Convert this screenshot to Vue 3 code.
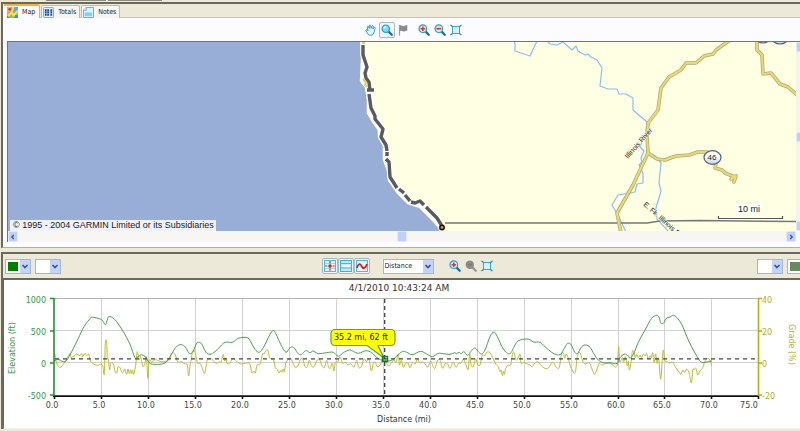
<script setup>
import { ref } from 'vue'

const activeTab = ref('map')
const axis = ref('Distance')

const tabs = [
  { id: 'map', label: 'Map' },
  { id: 'totals', label: 'Totals' },
  { id: 'notes', label: 'Notes' },
]

// Plot area geometry, in chart units
const plotLeft = 54
const tickStep = 46.96
const xTicks = Array.from({ length: 16 }, (_, i) => ({
  x: plotLeft + Math.round(i * tickStep),
  label: (i * 5).toFixed(1),
}))
const yTicks = [
  { y: 299, feet: '1000', grade: '40' },
  { y: 331, feet: '500', grade: '20' },
  { y: 363, feet: '0', grade: '0' },
  { y: 395, feet: '-500', grade: '-20' },
]

const roads = [
  'M730 40L716 50 713 54 704 56 696 63 686 63 681 70 669 77 661 88 658 110 648 123 647 136 648 153 633 185 617 213 621 233',
  'M648 153L657 159 665 160 676 156 689 155 698 152 707 152M716 164L715 168 722 170 725 173 735 177 731 179 736 176 734 182',
  'M757 41V50L762 55 763 74 771 73 780 84 788 87 797 95',
]

// Samples are stored at three steps per chart unit, measured from y = 285
const elevation = `162,230 172,222 190,230 200,226 215,200 235,160 252,125 274,97 280,97 290,99 298,101 308,107 315,119 318,117 325,96 330,95 338,98 350,110 370,140 390,178 405,218 412,217 422,210 432,212 440,220 448,234 465,238 495,234 510,215 525,190 535,181 545,179 556,186 566,203 572,206 580,198 590,174 597,172 605,177 617,201 630,208 645,200 660,185 670,175 680,171 697,172 715,160 735,157 747,162 765,193 778,202 790,188 800,168 810,148 820,136 828,147 842,178 858,202 868,190 875,186 883,189 892,203 904,209 913,200 920,197 930,203 938,198 945,201 955,206 980,203 1000,202 1015,214 1030,203 1048,195 1060,199 1075,205 1098,197 1115,203 1132,219 1152,227 1175,226 1190,213 1208,199 1220,202 1236,209 1262,199 1280,207 1297,215 1315,205 1330,206 1350,208 1365,203 1370,206 1377,202 1383,206 1392,200 1402,211 1410,203 1420,191 1427,190 1435,200 1445,207 1455,195 1470,155 1482,141 1492,155 1510,192 1530,206 1545,180 1555,167 1580,162 1590,164 1600,171 1620,172 1635,185 1655,202 1670,209 1683,207 1693,190 1702,176 1712,177 1725,203 1733,205 1745,185 1758,180 1770,187 1782,207 1795,225 1810,233 1830,233 1852,235 1860,218 1872,208 1882,210 1890,219 1900,208 1915,172 1935,135 1955,100 1970,91 1977,96 1982,113 1990,115 1998,101 2010,96 2020,91 2030,97 2045,118 2065,165 2085,204 2102,230 2115,232 2135,228`
const grade = `162,208 165,208 168,228 178,247 188,240 200,222 205,212 211,206 213,218 218,214 225,212 228,207 240,212 245,206 248,215 255,205 260,212 266,207 270,225 278,235 292,241 305,238 309,246 313,266 316,175 320,174 322,218 325,222 329,254 332,235 340,237 346,262 351,262 354,246 360,248 366,263 370,262 374,252 380,268 384,252 388,266 391,254 395,266 398,255 401,268 407,240 411,203 413,202 416,225 422,214 425,230 430,245 435,235 439,215 444,280 447,228 455,232 465,224 475,227 485,230 497,229 508,223 514,208 520,203 526,210 533,230 545,230 555,237 562,240 566,273 571,235 574,224 577,202 583,196 587,210 593,235 600,235 605,245 612,264 616,260 620,230 627,221 635,222 642,230 650,235 658,230 662,233 666,220 670,208 674,228 677,220 682,236 690,233 697,222 703,222 710,230 725,237 740,234 750,238 756,264 761,258 766,264 771,240 780,238 788,205 792,207 796,200 802,194 806,205 809,218 815,222 822,228 826,248 832,252 837,264 842,256 846,262 849,252 853,260 857,235 864,225 872,222 880,236 886,248 895,240 902,222 908,222 915,245 922,245 928,225 935,244 942,245 950,228 958,222 965,240 973,248 980,226 986,247 991,250 997,234 1002,258 1006,232 1013,232 1020,216 1028,235 1036,232 1044,240 1052,236 1062,246 1070,226 1076,247 1084,245 1092,222 1100,230 1107,223 1114,258 1120,234 1126,232 1132,245 1140,240 1146,228 1152,215 1160,235 1166,243 1175,232 1182,225 1188,232 1195,207 1198,240 1204,226 1210,247 1216,236 1224,234 1230,248 1238,232 1246,236 1252,222 1260,234 1268,230 1276,238 1284,246 1292,228 1300,246 1305,250 1312,228 1320,225 1328,250 1336,235 1343,237 1350,250 1360,232 1368,247 1376,234 1383,235 1390,222 1398,240 1405,252 1409,207 1413,238 1420,245 1427,222 1434,240 1440,240 1447,210 1455,212 1460,202 1470,203 1480,222 1488,238 1495,245 1500,260 1504,255 1507,272 1511,258 1513,268 1517,250 1525,240 1532,240 1538,205 1542,203 1548,225 1555,217 1560,208 1563,235 1570,232 1580,236 1590,240 1596,245 1604,235 1614,230 1622,240 1635,250 1646,248 1654,235 1660,233 1670,248 1678,246 1685,205 1690,205 1694,220 1698,207 1704,218 1710,240 1718,258 1726,262 1732,215 1740,203 1747,225 1755,237 1768,233 1775,250 1780,262 1784,268 1790,255 1798,235 1805,240 1815,236 1830,234 1852,241 1856,185 1859,228 1864,225 1867,218 1871,232 1876,215 1882,243 1885,228 1888,255 1894,225 1897,198 1902,203 1906,218 1910,208 1915,218 1920,210 1925,217 1930,207 1935,213 1940,205 1944,222 1950,212 1954,218 1958,203 1962,232 1967,207 1971,235 1976,220 1982,283 1987,222 1990,195 1994,225 2002,230 2010,235 2016,230 2022,238 2030,252 2038,262 2043,268 2048,256 2054,262 2060,252 2068,266 2074,294 2079,253 2082,254 2088,250 2093,270 2100,258 2108,248 2114,230 2122,220 2130,225 2135,242`

function toCurve(samples) {
  const p = samples.split(' ').map((s) => {
    const [x, y] = s.split(',').map(Number)
    return [x / 3, 285 + y / 3]
  })
  let d = `M${p[0][0].toFixed(1)} ${p[0][1].toFixed(1)}`
  for (let i = 1; i < p.length; i++) {
    const a = p[i - 2] || p[i - 1]
    const b = p[i - 1]
    const c = p[i]
    const e = p[i + 1] || c
    // Handles stay inside their segment so that spikes do not fold back
    const third = (c[0] - b[0]) / 3
    const s1 = (c[1] - a[1]) / (c[0] - a[0])
    const s2 = (e[1] - b[1]) / (e[0] - b[0])
    d += ` C${(b[0] + third).toFixed(1)} ${(b[1] + s1 * third).toFixed(1)} ${(c[0] - third).toFixed(1)} ${(c[1] - s2 * third).toFixed(1)} ${c[0].toFixed(1)} ${c[1].toFixed(1)}`
  }
  return d
}
const elevationPath = toCurve(elevation)
const gradePath = toCurve(grade)
</script>

<template>
  <main class="app">
    <div class="top-strip"><span></span><span></span></div>

    <section class="panel map-panel">
      <nav class="tabs" role="tablist">
        <button
          v-for="tab in tabs"
          :key="tab.id"
          type="button"
          role="tab"
          class="tab"
          :class="{ active: activeTab === tab.id }"
          :aria-selected="activeTab === tab.id"
          @click="activeTab = tab.id"
        >
          <svg v-if="tab.id === 'map'" class="tab-icon" viewBox="0 0 12 12">
            <rect x="0" y="0" width="12" height="12" rx="1" fill="#8cbf5a" />
            <path d="M0 0h5l-1 5-4 2z" fill="#f3a08a" />
            <path d="M7 0h5v5l-4 2z" fill="#4fb3dd" />
            <path d="M0 11l5-5 2 3 5-5" fill="none" stroke="#ffe04a" stroke-width="2.4" />
            <path d="M7 0L5 6" stroke="#ffe04a" stroke-width="2" />
            <circle cx="3" cy="2.5" r="1.5" fill="#e2321f" />
            <path d="M0 9l3 3H0z M9 9h3v3H8z" fill="#2e9bc9" />
          </svg>
          <svg v-else-if="tab.id === 'totals'" class="tab-icon" viewBox="0 0 12 12">
            <rect x="0.5" y="0.5" width="11" height="11" rx="1" fill="#d9f1fd" stroke="#4bb3e6" />
            <path d="M2 2.500h2v2H2z M4.600 2.500h2v2h-2z M8 2.500h2v2H8z M2 5h2v2H2z M4.600 5h2v2h-2z M8 5h2v2H8z M2 7.500h2v2H2z M4.600 7.500h2v2h-2z M8 7.500h2v2H8z" fill="#25459c" />
          </svg>
          <svg v-else class="tab-icon" viewBox="0 0 12 12">
            <path d="M3.500 0.500h8v11h-11v-8z" fill="#d6f3ff" stroke="#3fb1e6" />
            <path d="M3.500 0.500v3h-3" fill="#fff" stroke="#3fb1e6" />
            <path d="M2 6h8v4H2z" fill="#7fd0f5" />
          </svg>
          {{ tab.label }}
        </button>
      </nav>

      <div class="map-tools">
        <button type="button" class="tool" aria-label="Pan">
          <svg viewBox="0 0 12 12">
            <path d="M3.300 10.500L0.900 6.600c-.4-.9.700-1.300 1.200-.6l.9 1L2.200 3c-.1-1 1.100-1.200 1.400-.3l.6 1.700.1-2.700c0-1 1.400-1 1.500 0l.3 2.600.8-2.200c.4-.9 1.600-.5 1.400.4L7.900 5l1-1.400c.6-.7 1.700 0 1.300.8L9.300 7.700 8 10.500c-1 .9-3.700.9-4.700 0z" fill="#e6f8ff" stroke="#2492cf" stroke-width=".9" />
          </svg>
        </button>
        <button type="button" class="tool selected" aria-label="Zoom">
          <svg viewBox="0 0 12 12">
            <path d="M7.400 7.400l3.300 3.300" stroke="#1d6ea8" stroke-width="2.3" stroke-linecap="round" />
            <circle cx="4.800" cy="4.700" r="3.700" fill="#7fdcf8" stroke="#249fd6" stroke-width="1.2" />
            <path d="M2.900 4.500c.2-1.100 1-1.700 2-1.800" stroke="#fff" stroke-width="1.2" fill="none" />
          </svg>
        </button>
        <button type="button" class="tool" aria-label="Flag">
          <svg viewBox="0 0 12 12">
            <path d="M2.500 1v10.500" stroke="#999" stroke-width="1.2" />
            <path d="M3 1.500c1.500-.8 2.500 1 4 .6.900-.2 1.700-.8 3.300-1v5.400C8.500 6.500 8 7.700 6.500 7.400 5.200 7.100 4.500 6.400 3 7.200z" fill="#8b8b8b" />
          </svg>
        </button>
        <button type="button" class="tool after-gap" aria-label="Zoom in">
          <svg viewBox="0 0 12 12">
            <path d="M7.400 7.400l3.300 3.300" stroke="#1d6ea8" stroke-width="2.3" stroke-linecap="round" />
            <circle cx="4.800" cy="4.700" r="3.800" fill="#c9f1fd" stroke="#249fd6" stroke-width="1.2" />
            <path d="M4.800 2.400v4.600M2.500 4.700h4.600" stroke="#e8361c" stroke-width="1.6" />
          </svg>
        </button>
        <button type="button" class="tool" aria-label="Zoom out">
          <svg viewBox="0 0 12 12">
            <path d="M7.400 7.400l3.300 3.300" stroke="#1d6ea8" stroke-width="2.3" stroke-linecap="round" />
            <circle cx="4.800" cy="4.700" r="3.800" fill="#c9f1fd" stroke="#249fd6" stroke-width="1.2" />
            <path d="M2.400 4.700h4.800" stroke="#e8361c" stroke-width="1.7" />
          </svg>
        </button>
        <button type="button" class="tool" aria-label="Fit to view">
          <svg viewBox="0 0 12 12">
            <rect x="2.5" y="2.5" width="7" height="7" fill="#d3f2fe" stroke="#37a9dc" />
            <path d="M0.500 1l2 1.500M11.500 1l-2 1.500M0.500 11l2-1.500M11.500 11l-2-1.500" stroke="#1f86bd" stroke-width="1.3" />
          </svg>
        </button>
      </div>

      <div class="map-frame">
        <div class="map-view">
          <svg class="map" viewBox="8 42 788 189" preserveAspectRatio="xMidYMid slice" role="img" aria-label="Coastal map">
            <defs>
              <linearGradient id="shield" x1="0" y1="0" x2="0" y2="1">
                <stop offset="0.45" stop-color="#fff" />
                <stop offset="1" stop-color="#b9d2ec" />
              </linearGradient>
            </defs>
            <rect x="8" y="42" width="788" height="189" fill="#98aed6" />
            <path d="M362 40L362 60 361 81 366 87 368 100 368 113 374 123 379 130 379 137 384 146 384 160 388 170 389 180 398 193 408 203 420 207 430 217 439 227 441 233H798V40Z" fill="#ffffe3" stroke="#fff" stroke-width="2.5" stroke-linejoin="round" />
            <path d="M363 42V55L367 67 365 77 369 82 370 89 369 94 371 108 375 117 382 128 381 137 386 145 387 157 389 162 390 177 397 188 410 201 415 203 419 201 426 207 437 218 442 227" fill="none" stroke="#fff" stroke-width="5.5" stroke-linejoin="round" />
            <path d="M363 79l3 4-1 2 2 2" fill="none" stroke="#e5cf58" stroke-width="2" />
            <path d="M362 43h3" stroke="#e5cf58" stroke-width="2" />

            <g fill="none" stroke="#84c1f2" stroke-width="1.2" stroke-linejoin="round">
              <path d="M514 41L515 44 515 51 530 56 537 41" />
              <path d="M548 42L550 44 557 45 563 42 572 50 576 46 578 51 585 55 588 54 591 57 597 60 602 68 600 86 608 89 617 89 619 94 626 94 633 98 633 110 647 122 646 132 640 147 644 151 641 158 642 162 639 165 643 173 643 183 637 184 635 192 618 195 612 205 618 215 626 232" />
              <path d="M648 153L655 156 661 163 659 183 661 191 656 208 657 219 669 232" />
            </g>

            <path d="M445 223H647L660 221 700 220.500 796 221.500" fill="none" stroke="#77777a" stroke-width="1.5" />

            <g fill="none" stroke-linejoin="round" stroke-linecap="round">
              <path v-for="d in roads" :key="d" :d="d" stroke="#aaa68c" stroke-width="3.6" />
              <path v-for="d in roads" :key="d" :d="d" stroke="#ecda64" stroke-width="2.1" />
            </g>

            <g fill="url(#shield)" stroke="#55616d" stroke-width="1.2">
              <ellipse cx="763" cy="38" rx="7" ry="5" />
              <ellipse cx="780" cy="38" rx="8" ry="6" />
              <ellipse cx="712.5" cy="157.5" rx="8.5" ry="6.8" />
            </g>
            <text x="712" y="160" class="shield-label" text-anchor="middle">46</text>

            <path
              d="M363 45V55L367 67 365 73 366 78 369 82 370 91M367 90h7M369 94L371 108 375 116 375 119 383 129 381 137 386 145 387 151M387 152V156M386 159L389 162 390 177 397 188M399 189L404 193M405 195L410 201M411 202L415 203 420 201 424 205M426 207L437 218 442 226"
              fill="none"
              stroke="#5b5b5d"
              stroke-width="3.4"
              stroke-linejoin="round"
            />
            <circle cx="442" cy="227.5" r="2.2" fill="#f08a1c" stroke="#111" stroke-width="1.5" />

            <text transform="translate(628 159) rotate(-49)" class="river-label">Illinois River</text>
            <text transform="translate(643 205) rotate(42)" class="river-label">E. Fk. Illinois R</text>

            <rect x="736" y="203" width="26" height="10" fill="#fff" />
            <text x="749" y="212" class="scale-label" text-anchor="middle">10 mi</text>
            <path d="M718.500 216v2.500H782.500V216" fill="none" stroke="#55555a" stroke-width="1.2" />
          </svg>
          <p class="copyright">© 1995 - 2004 GARMIN Limited or its Subsidiaries</p>
        </div>

        <div class="scroll-v">
          <button type="button" aria-label="Scroll up"></button>
          <span class="thumb"></span>
          <button type="button" aria-label="Scroll down"></button>
        </div>

        <div class="scroll-h">
          <button type="button" aria-label="Scroll left">
            <svg viewBox="0 0 10 10"><path d="M6 2.500L3.500 5 6 7.500" /></svg>
          </button>
          <span class="thumb"></span>
          <button type="button" aria-label="Scroll right">
            <svg viewBox="0 0 10 10"><path d="M4 2.500L6.500 5 4 7.500" /></svg>
          </button>
        </div>
      </div>
    </section>

    <section class="panel chart-panel">
      <div class="chart-tools">
        <div class="group">
          <span class="combo green">
            <select aria-label="Left series colour"><option></option></select>
            <svg class="arrow" viewBox="0 0 10 13"><path d="M2.500 5L5 7.500 7.500 5" /></svg>
          </span>
          <span class="combo">
            <select aria-label="Second left series"><option></option></select>
            <svg class="arrow" viewBox="0 0 10 13"><path d="M2.500 5L5 7.500 7.500 5" /></svg>
          </span>
        </div>

        <div class="group center">
          <div class="toggles">
            <button type="button" class="tool selected" aria-label="Crosshair">
              <svg viewBox="0 0 12 12">
                <rect x="0.5" y="0.5" width="11" height="11" fill="#dcf6ff" stroke="#4dbbe8" />
                <path d="M1 3.500h10M1 8.500h10" stroke="#9bdcf5" />
                <path d="M6 1v10M1 6h10" stroke="#e0261c" stroke-width="1.2" stroke-dasharray="2 .6" />
                <circle cx="6" cy="6" r="1.5" fill="#e0261c" />
              </svg>
            </button>
            <button type="button" class="tool selected" aria-label="Grid">
              <svg viewBox="0 0 12 12">
                <rect x="0.5" y="0.5" width="11" height="11" fill="#bfeafb" stroke="#41aee4" />
                <path d="M1 3.500h10M1 8h10" stroke="#4bb4ea" stroke-width="1.2" />
                <path d="M2 6h8" stroke="#eefaff" stroke-width="2" />
              </svg>
            </button>
            <button type="button" class="tool selected" aria-label="Smoothing">
              <svg viewBox="0 0 12 12">
                <rect x="0.5" y="0.5" width="11" height="11" fill="#e4f8ff" stroke="#4dbbe8" />
                <path d="M1 8C2 3.500 4 3 5.500 6S9 9.500 11 4" fill="none" stroke="#e81313" stroke-width="1.7" />
              </svg>
            </button>
          </div>
          <span class="combo wide">
            <select v-model="axis" aria-label="Horizontal axis">
              <option>Distance</option>
              <option>Time</option>
            </select>
            <svg class="arrow" viewBox="0 0 10 13"><path d="M2.500 5L5 7.500 7.500 5" /></svg>
          </span>
          <div class="zooms">
            <button type="button" class="tool" aria-label="Zoom chart in">
              <svg viewBox="0 0 12 12">
                <path d="M7.400 7.400l3.300 3.300" stroke="#1d6ea8" stroke-width="2.3" stroke-linecap="round" />
                <circle cx="4.800" cy="4.700" r="3.800" fill="#c9f1fd" stroke="#249fd6" stroke-width="1.2" />
                <path d="M4.800 2.400v4.600M2.500 4.700h4.600" stroke="#e8361c" stroke-width="1.6" />
              </svg>
            </button>
            <button type="button" class="tool" aria-label="Zoom chart out">
              <svg viewBox="0 0 12 12">
                <path d="M7.400 7.400l3.300 3.300" stroke="#999" stroke-width="2.3" stroke-linecap="round" />
                <circle cx="4.800" cy="4.700" r="4.200" fill="#8a8a8a" />
                <path d="M2.800 4.700h4" stroke="#777" stroke-width="1.4" />
              </svg>
            </button>
            <button type="button" class="tool" aria-label="Fit chart">
              <svg viewBox="0 0 12 12">
                <rect x="2.5" y="2.5" width="7" height="7" fill="#d3f2fe" stroke="#37a9dc" />
                <path d="M0.500 1l2 1.500M11.500 1l-2 1.500M0.500 11l2-1.500M11.500 11l-2-1.500" stroke="#1f86bd" stroke-width="1.3" />
              </svg>
            </button>
          </div>
        </div>

        <div class="group end">
          <span class="combo">
            <select aria-label="Second right series"><option></option></select>
            <svg class="arrow" viewBox="0 0 10 13"><path d="M2.500 5L5 7.500 7.500 5" /></svg>
          </span>
          <span class="combo olive">
            <select aria-label="Right series colour"><option></option></select>
            <svg class="arrow" viewBox="0 0 10 13"><path d="M2.500 5L5 7.500 7.500 5" /></svg>
          </span>
        </div>
      </div>

      <div class="chart-frame">
        <svg class="chart" viewBox="4 280 796 148" role="img" aria-label="Elevation and grade by distance">
          <text x="399" y="291" class="title" text-anchor="middle">4/1/2010 10:43:24 AM</text>

          <g stroke="#d2d2d2">
            <line v-for="t in xTicks.slice(1, 15)" :key="t.label" :x1="t.x + 0.5" :x2="t.x + 0.5" y1="299" y2="395" />
            <line v-for="t in yTicks.slice(1, 3)" :key="t.y" x1="55" x2="758" :y1="t.y - 0.5" :y2="t.y - 0.5" />
          </g>
          <path d="M54 298.500H758" stroke="#b4b4b4" />

          <path :d="gradePath" fill="none" stroke="#bdbb2c" />
          <path :d="elevationPath" fill="none" stroke="#42a24a" />

          <path d="M55 358.800H758" stroke="#444" stroke-width="1.2" stroke-dasharray="4 4" />
          <path d="M384.700 299V395" stroke="#333" stroke-width="1.2" stroke-dasharray="4 3" />

          <path d="M53 396.200H759" stroke="#111" stroke-width="1.7" />
          <g stroke="#111" stroke-width="1.6">
            <line v-for="t in xTicks" :key="t.label" :x1="t.x + 0.5" :x2="t.x + 0.5" y1="396" y2="399" />
          </g>
          <path d="M54 298V396M50 298.500h4M50 331h4M50 363h4M50 395h4" stroke="#1c962a" stroke-width="1.6" />
          <path d="M758.500 298V396M758 298.500h4M758 331h4M758 363h4M758 395h4" stroke="#b1ae17" stroke-width="1.6" />

          <g class="tick" fill="#444">
            <text v-for="t in xTicks" :key="t.label" :x="t.label === '75.0' ? t.x - 9 : t.x - 2" y="408" text-anchor="middle">{{ t.label }}</text>
            <text x="404" y="422" text-anchor="middle" fill="#333">Distance (mi)</text>
          </g>
          <g class="tick" fill="#2f9b3d">
            <text v-for="t in yTicks" :key="t.feet" x="46" :y="t.y + 4" text-anchor="end">{{ t.feet }}</text>
            <text transform="translate(15 374) rotate(-90)">Elevation (ft)</text>
          </g>
          <g class="tick" fill="#b3b024">
            <text v-for="t in yTicks" :key="t.grade" x="762" :y="t.y + 4">{{ t.grade }}</text>
            <text transform="translate(789 324) rotate(90)">Grade (%)</text>
          </g>

          <g>
            <path d="M335 329.500H391a4 4 0 0 1 4 4V341.500a4 4 0 0 1-4 4H378L384 358 367 345.500H335a4 4 0 0 1-4-4V333.500a4 4 0 0 1 4-4Z" fill="#ffff00" stroke="#52a63a" stroke-width="1.2" />
            <rect x="382.5" y="356.5" width="5" height="5" fill="none" stroke="#147a24" stroke-width="1.4" />
            <text x="334" y="340" class="tick" fill="#222">35.2 mi, 62 ft</text>
          </g>
        </svg>
      </div>
    </section>
  </main>
</template>

<style>
body {
  margin: 0;
  background: #ece9d8;
}
</style>

<style scoped>
.app {
  overflow: hidden;
  background: #ece9d8;
  color: #222;
  font-family: "DejaVu Sans Condensed", "DejaVu Sans", sans-serif;
  font-size: 7px;
}
button,
select {
  font: inherit;
  color: inherit;
  padding: 0;
  margin: 0;
}
svg {
  display: block;
}
.top-strip {
  display: flex;
  gap: 2px;
  height: 2px;
  padding-left: 46px;
}
.top-strip span {
  width: 60px;
  height: 1px;
  background: #8f8b7d;
}
.top-strip span + span {
  width: 54px;
}
.panel {
  box-sizing: border-box;
  margin-left: 1px;
  border-left: 2px solid #6a695f;
  border-top: 2px solid #6a695f;
}
.map-panel {
  background: #fcfcfe;
  border-bottom: 1px solid #a5b0b8;
}
.tabs {
  display: flex;
  gap: 1px;
  height: 13px;
  background: #ece9d8;
  border-bottom: 1px solid #b9c5cc;
}
.tab {
  display: flex;
  align-items: center;
  gap: 4px;
  box-sizing: border-box;
  height: 13px;
  margin-top: 1px;
  padding: 0 3px 0 1px;
  border: 1px solid #b4bcc0;
  border-bottom: 0;
  border-radius: 2px 2px 0 0;
  background: #f6f5ef;
  line-height: 10px;
}
.tab.active {
  height: 14px;
  margin-top: 0;
  padding: 0 4px 0 3px;
  border-top: 2px solid #f5b32c;
  border-left-color: #fcfcfe;
  background: #fcfcfe;
}
.tab-icon {
  width: 11px;
  height: 11px;
}
.map-tools {
  display: flex;
  align-items: center;
  justify-content: center;
  height: 23px;
  padding-left: 24px;
}
.tool {
  display: grid;
  place-items: center;
  box-sizing: border-box;
  width: 16px;
  height: 16px;
  border: 1px solid transparent;
  border-radius: 2px;
  background: transparent;
}
.tool svg {
  width: 12px;
  height: 12px;
}
.tool.selected {
  border-color: #a9b7c6;
  background: #f1f4f8;
}
.after-gap {
  margin-left: 5px;
}
.map-frame {
  display: grid;
  grid-template-columns: 1fr 4px;
  margin: 0 0 5px 4px;
  border-top: 1px solid #77756a;
  border-left: 1px solid #77756a;
}
.map-view {
  position: relative;
  min-width: 0;
}
.map {
  width: 100%;
  height: 189px;
}
.shield-label,
.river-label,
.scale-label {
  font: 8px "Liberation Sans", Arial, sans-serif;
  fill: #222;
}
.river-label {
  font-size: 7px;
  stroke: #ffffe3;
  stroke-width: 1px;
  paint-order: stroke;
}
.scale-label {
  font-size: 9px;
}
.copyright {
  position: absolute;
  left: 2px;
  bottom: 0;
  margin: 0;
  padding: 0 2px 0 3px;
  background: #eff2fa;
  font: 9px/11px "Liberation Sans", Arial, sans-serif;
}
.scroll-v {
  display: flex;
  flex-direction: column;
  justify-content: space-between;
  overflow: hidden;
  background: #f4f3ee;
}
.scroll-v button,
.scroll-v .thumb {
  width: 10px;
  height: 10px;
}
.scroll-h {
  display: flex;
  justify-content: space-between;
  height: 11px;
  background: #f7f6f2;
}
.scroll-h button,
.scroll-h .thumb {
  width: 10px;
  height: 11px;
}
.scroll-h button,
.scroll-v button,
.thumb {
  box-sizing: border-box;
  border: 1px solid #dfe8fd;
  border-radius: 2px;
  background: #bdcffb;
}
.scroll-h path,
.arrow path {
  fill: none;
  stroke: #3f5785;
  stroke-width: 1.7;
}
.chart-panel {
  margin-top: 4px;
}
.chart-tools {
  display: grid;
  grid-template-columns: 1fr auto 1fr;
  align-items: center;
  width: calc(100% + 13px);
  height: 24px;
}
.group {
  display: flex;
  align-items: center;
  gap: 4px;
  padding: 0 2px;
}
.group.end {
  justify-content: flex-end;
  padding: 0;
}
.group.center {
  gap: 13px;
  padding: 0;
}
.toggles,
.zooms {
  display: flex;
}
.combo {
  position: relative;
  display: block;
  width: 26px;
  height: 15px;
}
.combo select {
  display: block;
  box-sizing: border-box;
  width: 100%;
  height: 15px;
  border: 1px solid #9db9d4;
  border-radius: 0;
  background: #fff;
  appearance: none;
}
.combo.wide {
  width: 51px;
}
.combo.wide select {
  padding-left: 1px;
}
.combo.green select {
  background: linear-gradient(#008000, #008000) 2px 2px / 10px 9px no-repeat #fff;
}
.combo.olive select {
  background: linear-gradient(#678a61, #678a61) 2px 2px / 10px 9px no-repeat #fff;
}
.arrow {
  position: absolute;
  top: 1px;
  right: 1px;
  width: 10px;
  height: 13px;
  background: #c3d4fb;
  pointer-events: none;
}
.chart-frame {
  border-top: 2px solid #6a695f;
  border-left: 1px solid #6a695f;
  border-bottom: 1px solid #f4f2ea;
  background: #fff;
}
.chart {
  width: 100%;
  height: auto;
}
.title {
  font: 9px "DejaVu Sans", Verdana, sans-serif;
  fill: #333;
}
.tick {
  font: 8px "DejaVu Sans", Verdana, sans-serif;
}
</style>
